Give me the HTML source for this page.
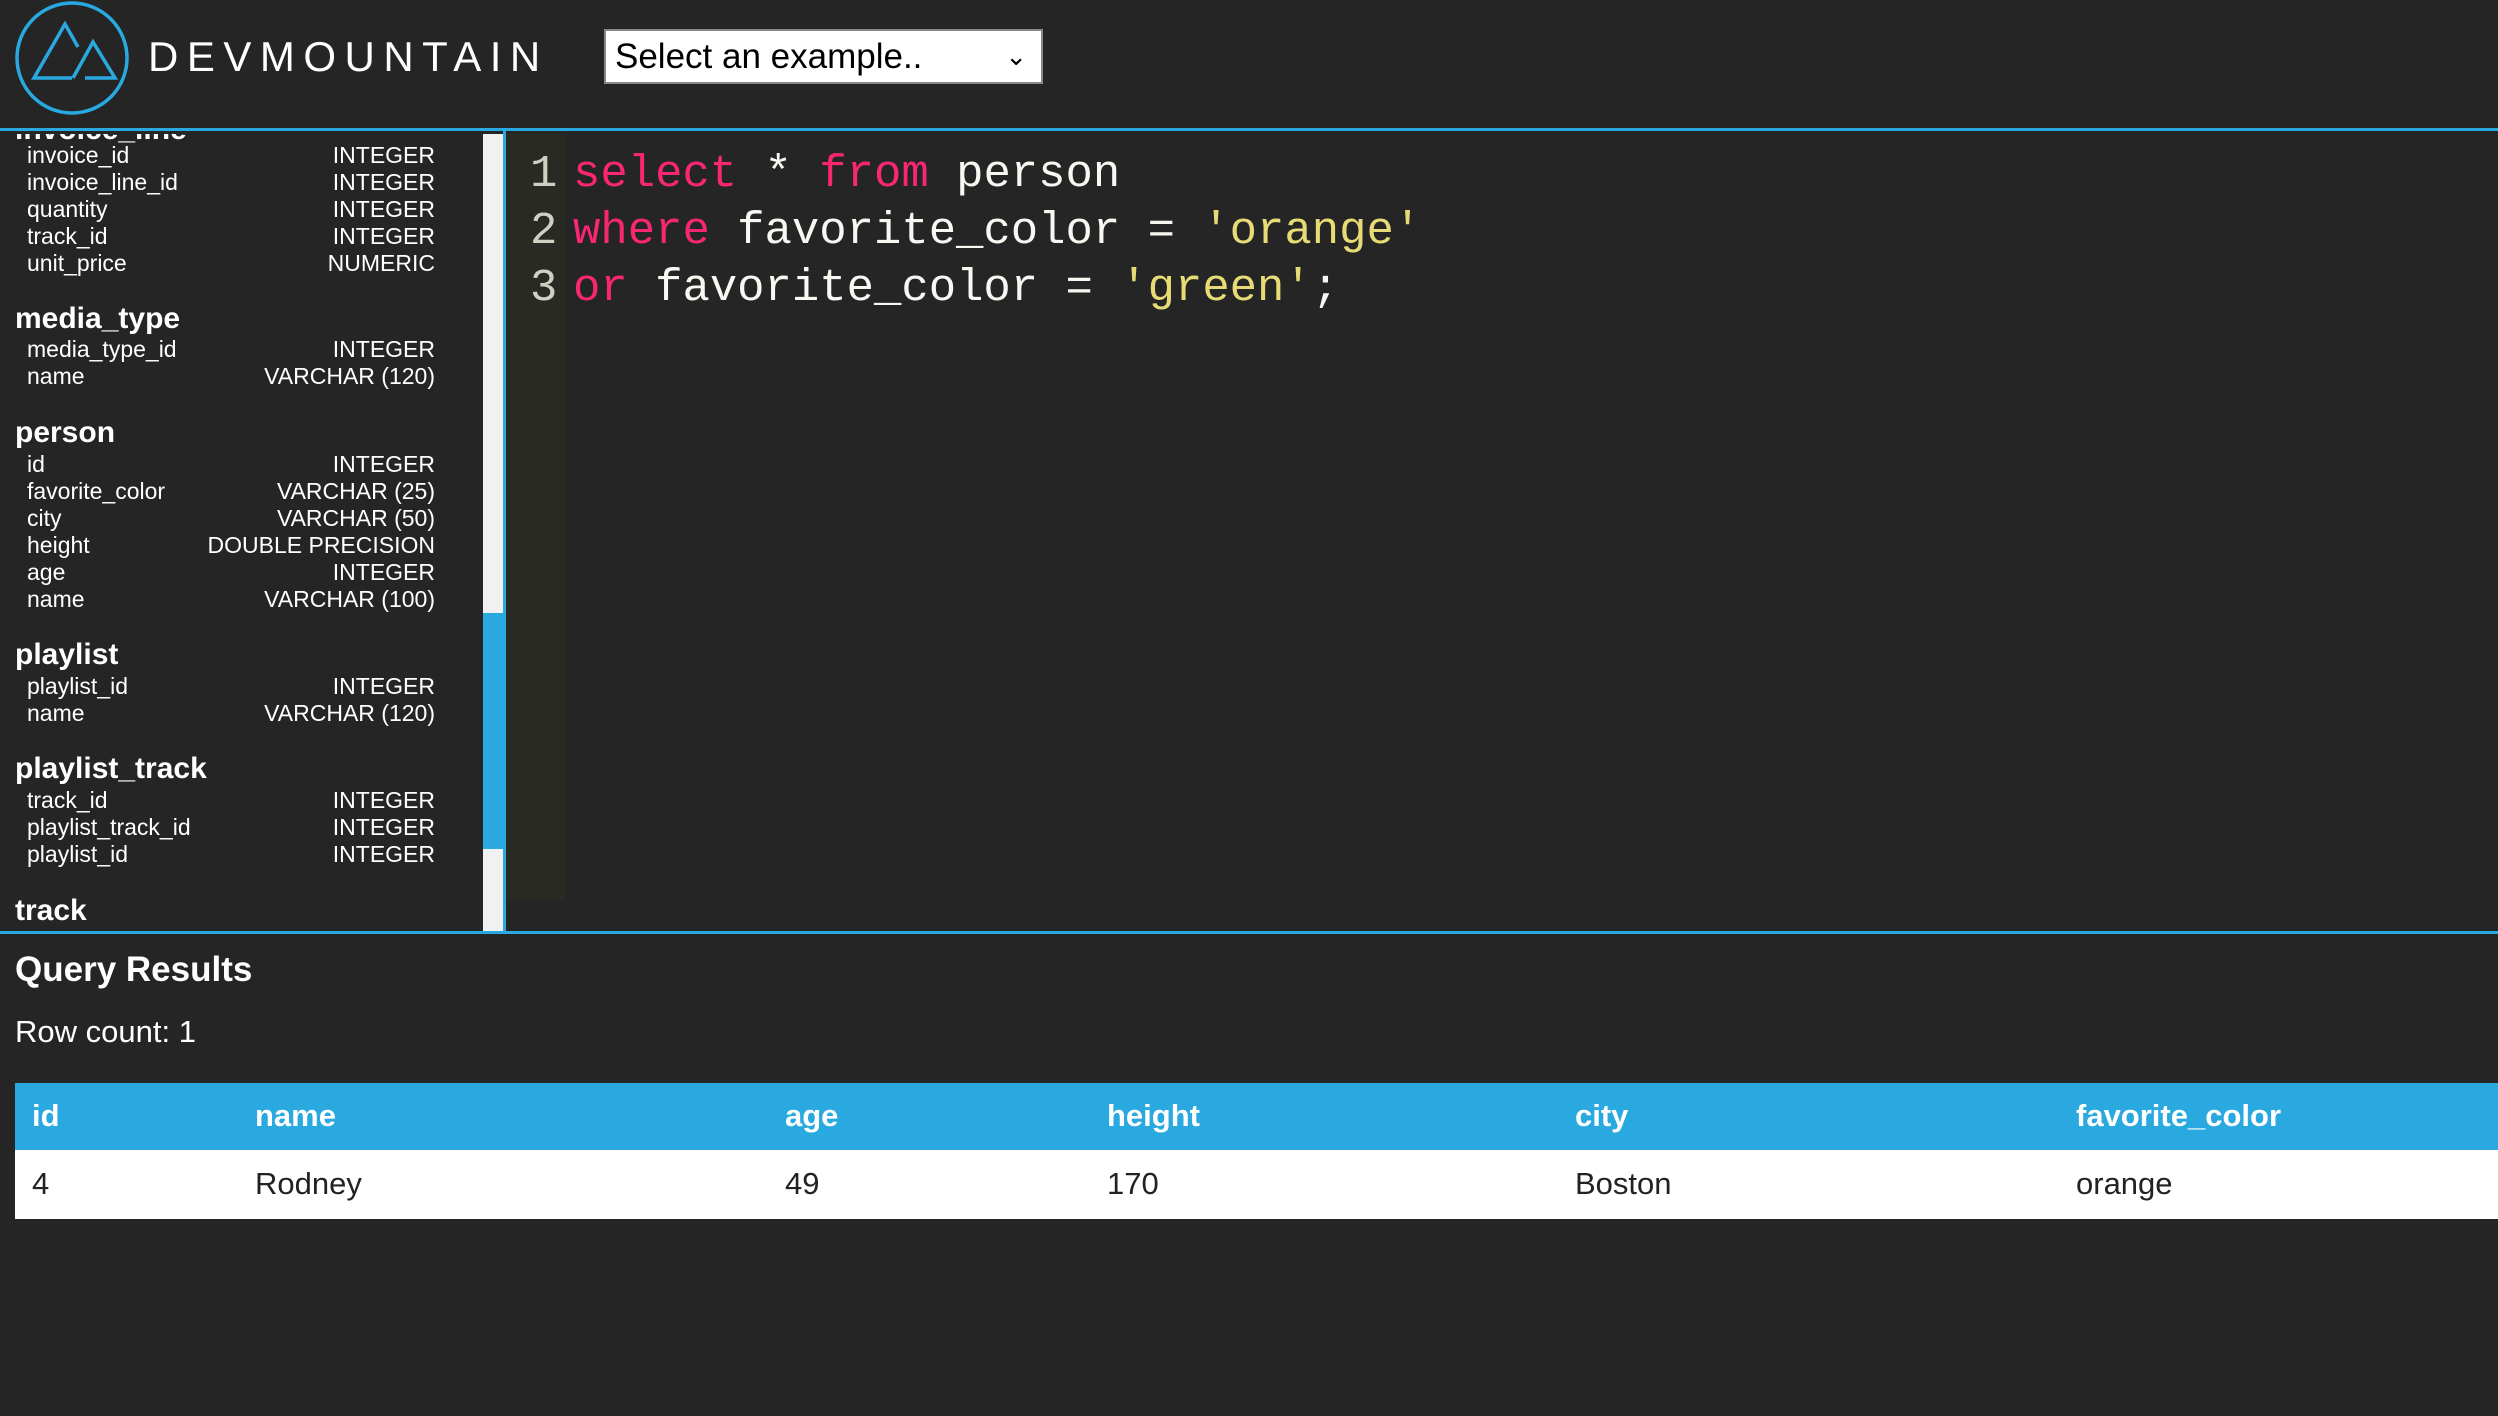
<!DOCTYPE html>
<html><head><meta charset="utf-8">
<style>
*{margin:0;padding:0;box-sizing:border-box}
html,body{width:2498px;height:1416px;overflow:hidden;background:#252525;font-family:"Liberation Sans",sans-serif;color:#fff}
#hdr{position:absolute;left:0;top:0;width:2498px;height:131px;background:#252525;border-bottom:3px solid #29a9e0}
#brand{position:absolute;left:148px;top:32px;font-size:42px;letter-spacing:8.5px;color:#fff;line-height:50px}
#sel{position:absolute;left:604px;top:29px;width:439px;height:55px;background:#fff;border:2px solid #888;color:#000;font-size:35px;line-height:51px;padding-left:9px}
#sel span.ch{position:absolute;right:14px;top:0;font-size:26px}
#side{position:absolute;left:0;top:134px;width:483px;height:797px;overflow:hidden}
.r{position:absolute;left:27px;width:408px;font-size:23px;line-height:27px;height:27px}
.r b{font-weight:normal;position:absolute;right:0;top:0}
.h{position:absolute;left:15px;font-size:30px;font-weight:bold;line-height:36px}
#sb{position:absolute;left:483px;top:134px;width:20px;height:797px;background:#f1f1f1}
#thumb{position:absolute;left:483px;top:613px;width:20px;height:236px;background:#29a9e0}
#vline{position:absolute;left:503px;top:131px;width:3px;height:801px;background:#29a9e0}
#gut{position:absolute;left:506px;top:134px;width:59px;height:767px;background:#2a2a25}
#hline{position:absolute;left:0;top:931px;width:2498px;height:3px;background:#29a9e0}
.ln{position:absolute;left:530px;font-family:"Liberation Mono",monospace;font-size:45.6px;color:#cfcfc2;line-height:57px}
.cd{position:absolute;left:573px;font-family:"Liberation Mono",monospace;font-size:45.6px;color:#f8f8f2;line-height:57px;white-space:pre}
.k{color:#f92672}.s{color:#e6db74}
#qr{position:absolute;left:15px;top:948px;font-size:35px;font-weight:bold;line-height:44px}
#rc{position:absolute;left:15px;top:1012px;font-size:31px;line-height:40px}
#th{position:absolute;left:15px;top:1083px;width:2483px;height:67px;background:#29a9e0}
#tr{position:absolute;left:15px;top:1150px;width:2483px;height:69px;background:#fff}
.c{position:absolute;font-size:31px;line-height:40px}
</style></head><body>
<div id="hdr">
<svg style="position:absolute;left:0;top:0" width="140" height="130" viewBox="0 0 140 130">
<circle cx="72" cy="58" r="55" fill="none" stroke="#29a9e0" stroke-width="3.5"/>
<path d="M78 47 L65 24 L34 78 L72 78 M73 78 L93 42 L115 78 L85 78" fill="none" stroke="#29a9e0" stroke-width="3.5" stroke-linejoin="miter"/>
</svg>
<div id="brand">DEVMOUNTAIN</div>
<div id="sel">Select an example..<span class="ch">&#8964;</span></div>
</div>

<div id="side">
<div class="h" style="top:-22px">invoice_line</div>
<div class="r" style="top:8px">invoice_id<b>INTEGER</b></div>
<div class="r" style="top:35px">invoice_line_id<b>INTEGER</b></div>
<div class="r" style="top:62px">quantity<b>INTEGER</b></div>
<div class="r" style="top:89px">track_id<b>INTEGER</b></div>
<div class="r" style="top:116px">unit_price<b>NUMERIC</b></div>
<div class="h" style="top:167px">media_type</div>
<div class="r" style="top:202px">media_type_id<b>INTEGER</b></div>
<div class="r" style="top:229px">name<b>VARCHAR (120)</b></div>
<div class="h" style="top:281px">person</div>
<div class="r" style="top:317px">id<b>INTEGER</b></div>
<div class="r" style="top:344px">favorite_color<b>VARCHAR (25)</b></div>
<div class="r" style="top:371px">city<b>VARCHAR (50)</b></div>
<div class="r" style="top:398px">height<b>DOUBLE PRECISION</b></div>
<div class="r" style="top:425px">age<b>INTEGER</b></div>
<div class="r" style="top:452px">name<b>VARCHAR (100)</b></div>
<div class="h" style="top:503px">playlist</div>
<div class="r" style="top:539px">playlist_id<b>INTEGER</b></div>
<div class="r" style="top:566px">name<b>VARCHAR (120)</b></div>
<div class="h" style="top:617px">playlist_track</div>
<div class="r" style="top:653px">track_id<b>INTEGER</b></div>
<div class="r" style="top:680px">playlist_track_id<b>INTEGER</b></div>
<div class="r" style="top:707px">playlist_id<b>INTEGER</b></div>
<div class="h" style="top:759px">track</div>
</div>
<div id="sb"></div><div id="thumb"></div>
<div id="vline"></div>
<div id="gut"></div>
<div class="ln" style="top:146px">1</div>
<div class="ln" style="top:203px">2</div>
<div class="ln" style="top:260px">3</div>
<div class="cd" style="top:146px"><span class="k">select</span> * <span class="k">from</span> person</div>
<div class="cd" style="top:203px"><span class="k">where</span> favorite_color = <span class="s">'orange'</span></div>
<div class="cd" style="top:260px"><span class="k">or</span> favorite_color = <span class="s">'green'</span>;</div>
<div id="hline"></div>

<div id="qr">Query Results</div>
<div id="rc">Row count: 1</div>
<div id="th">
<div class="c" style="left:17px;top:13px;font-weight:bold">id</div>
<div class="c" style="left:240px;top:13px;font-weight:bold">name</div>
<div class="c" style="left:770px;top:13px;font-weight:bold">age</div>
<div class="c" style="left:1092px;top:13px;font-weight:bold">height</div>
<div class="c" style="left:1560px;top:13px;font-weight:bold">city</div>
<div class="c" style="left:2061px;top:13px;font-weight:bold">favorite_color</div>
</div>
<div id="tr" style="color:#222">
<div class="c" style="left:17px;top:14px">4</div>
<div class="c" style="left:240px;top:14px">Rodney</div>
<div class="c" style="left:770px;top:14px">49</div>
<div class="c" style="left:1092px;top:14px">170</div>
<div class="c" style="left:1560px;top:14px">Boston</div>
<div class="c" style="left:2061px;top:14px">orange</div>
</div>
</body></html>
